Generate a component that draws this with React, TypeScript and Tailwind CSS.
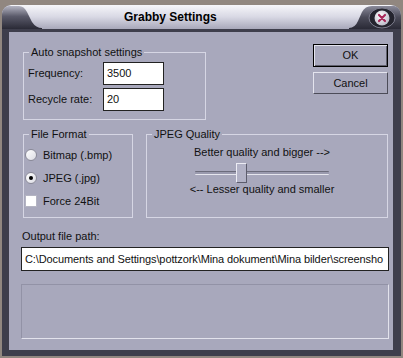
import React from 'react'

const Group = ({ title, className, children }: { title: string; className: string; children?: React.ReactNode }) => (
  <fieldset className={`border border-[#d6d6e4] ${className}`}>
    <legend className="ml-[5px] px-[2px] leading-[13px]">{title}</legend>
    {children}
  </fieldset>
)

const Radio = ({ checked, label }: { checked?: boolean; label: string }) => (
  <div className="flex items-center h-[16px] gap-[6px]">
    <span className="w-[12px] h-[12px] rounded-full border border-[#8a8a98] bg-linear-to-br from-white to-[#dcdce4] flex items-center justify-center">
      {checked && <span className="w-[4px] h-[4px] rounded-full bg-black" />}
    </span>
    <span>{label}</span>
  </div>
)

export default function App() {
  return (
    <div className="w-[403px] h-[358px] bg-[#918780] pt-[5px] pl-[2px] font-['Liberation_Sans',Arial,sans-serif] text-[11px] text-[#111]">
      <div className="w-[399px] h-[351px] flex flex-col rounded-tl-[9px] rounded-tr-[10px] bg-[#3e3e4c] overflow-hidden">
        {/* title bar */}
        <div className="h-[24px] flex items-center bg-linear-to-b from-[#f6f6fa] via-[#d8d8e4] to-[#a8a8ba]">
          <svg width="40" height="24" viewBox="0 0 40 24" className="shrink-0">
            <defs>
              <linearGradient id="lc" x1="0" y1="0" x2="0" y2="1">
                <stop offset="0" stopColor="#b4b4c2" />
                <stop offset="0.45" stopColor="#5a5a6a" />
                <stop offset="1" stopColor="#2a2a36" />
              </linearGradient>
            </defs>
            <path d="M0,24 L0,8 Q0,1 7,1 L17,1 Q22,1 25,7 L30,17 Q34,23 40,23 L40,24 Z" fill="url(#lc)" />
          </svg>
          <div className="ml-[82px] font-bold text-[12px] text-black">Grabby Settings</div>
          <svg width="52" height="24" viewBox="0 0 52 24" className="ml-auto shrink-0">
            <defs>
              <linearGradient id="rc" x1="0" y1="0" x2="0" y2="1">
                <stop offset="0" stopColor="#8a8a9a" />
                <stop offset="0.5" stopColor="#4a4a58" />
                <stop offset="1" stopColor="#2a2a36" />
              </linearGradient>
              <radialGradient id="btn" cx="0.4" cy="0.35" r="0.7">
                <stop offset="0" stopColor="#ffffff" />
                <stop offset="1" stopColor="#b8b8c6" />
              </radialGradient>
            </defs>
            <path d="M0,24 L0,23 Q6,23 9,16 L13,7 Q16,1 23,1 L45,1 Q52,1 52,8 L52,24 Z" fill="url(#rc)" />
            <ellipse cx="33" cy="13" rx="13" ry="10" fill="#24242e" />
            <ellipse cx="33" cy="13" rx="13" ry="10" fill="none" stroke="#7c7c8c" strokeWidth="1" />
            <circle cx="33" cy="13" r="7.5" fill="url(#btn)" />
            <path d="M30,10 L36,16 M36,10 L30,16" stroke="#a8285a" strokeWidth="2.2" strokeLinecap="round" />
          </svg>
        </div>

        {/* frame + body */}
        <div className="flex-1 pt-[3px] pl-[7px] pr-[8px] pb-[6px]">
          <div className="w-[384px] h-[318px] bg-[#a8a8bc] flex flex-col">
            {/* row 1 */}
            <div className="flex mt-[12px]">
              <Group title="Auto snapshot settings" className="ml-[14px] mt-[2px] w-[183px] h-[74px]">
                <div className="flex items-center mt-[3px] pl-[4px]">
                  <span className="w-[75px]">Frequency:</span>
                  <div className="w-[61px] h-[23px] bg-white border border-[#222] flex items-center px-[3px]">3500</div>
                </div>
                <div className="flex items-center mt-[3px] pl-[4px]">
                  <span className="w-[75px]">Recycle rate:</span>
                  <div className="w-[61px] h-[23px] bg-white border border-[#222] flex items-center px-[3px]">20</div>
                </div>
              </Group>
              <div className="ml-auto mr-[5px] flex flex-col gap-[5px]">
                <div className="w-[75px] h-[23px] border border-black shadow-[inset_1px_1px_0_#e4e4ee,inset_-1px_-1px_0_#60606e] flex items-center justify-center">OK</div>
                <div className="w-[75px] h-[22px] border border-t-[#e4e4ee] border-l-[#e4e4ee] border-b-[#4c4c58] border-r-[#4c4c58] flex items-center justify-center">Cancel</div>
              </div>
            </div>

            {/* row 2 */}
            <div className="flex mt-[8px]">
              <Group title="File Format" className="ml-[14px] w-[110px] h-[90px]">
                <div className="flex flex-col gap-[7px] mt-[6px] pl-[1px]">
                  <Radio label="Bitmap (.bmp)" />
                  <Radio checked label="JPEG (.jpg)" />
                  <div className="flex items-center h-[16px] gap-[6px]">
                    <span className="w-[12px] h-[12px] border border-[#b4b4c2] bg-white" />
                    <span>Force 24Bit</span>
                  </div>
                </div>
              </Group>
              <Group title="JPEG Quality" className="ml-[13px] w-[242px] h-[90px]">
                <div className="flex flex-col items-center pr-[10px] mt-[5px]">
                  <div className="leading-[13px]">Better quality and bigger --&gt;</div>
                  <div className="relative w-[134px] h-[20px] mt-[4px] flex items-center">
                    <div className="w-full h-[4px] bg-[#9a9aae] border-t border-t-[#6c6c7c] border-b border-b-[#e6e6ee] rounded-[1px]" />
                    <div className="absolute left-[41px] top-0 w-[11px] h-[20px] bg-[#b2b2c6] border border-t-[#ececf4] border-l-[#ececf4] border-b-[#5c5c6c] border-r-[#5c5c6c]" />
                  </div>
                  <div className="leading-[13px]">&lt;-- Lesser quality and smaller</div>
                </div>
              </Group>
            </div>

            {/* row 3 */}
            <div className="ml-[13px] mt-[12px] leading-[13px]">Output file path:</div>
            <div className="ml-[12px] mt-[4px] w-[368px] h-[24px] bg-white border border-[#222] flex items-center pl-[3px] overflow-hidden whitespace-nowrap tracking-[-0.1px]">
              C:\Documents and Settings\pottzork\Mina dokument\Mina bilder\screensho
            </div>

            {/* row 4 */}
            <div className="ml-[12px] mt-[13px] w-[368px] h-[55px] border border-t-[#9292a6] border-l-[#9292a6] border-b-[#e2e2ec] border-r-[#e2e2ec]" />
          </div>
        </div>
      </div>
    </div>
  )
}
